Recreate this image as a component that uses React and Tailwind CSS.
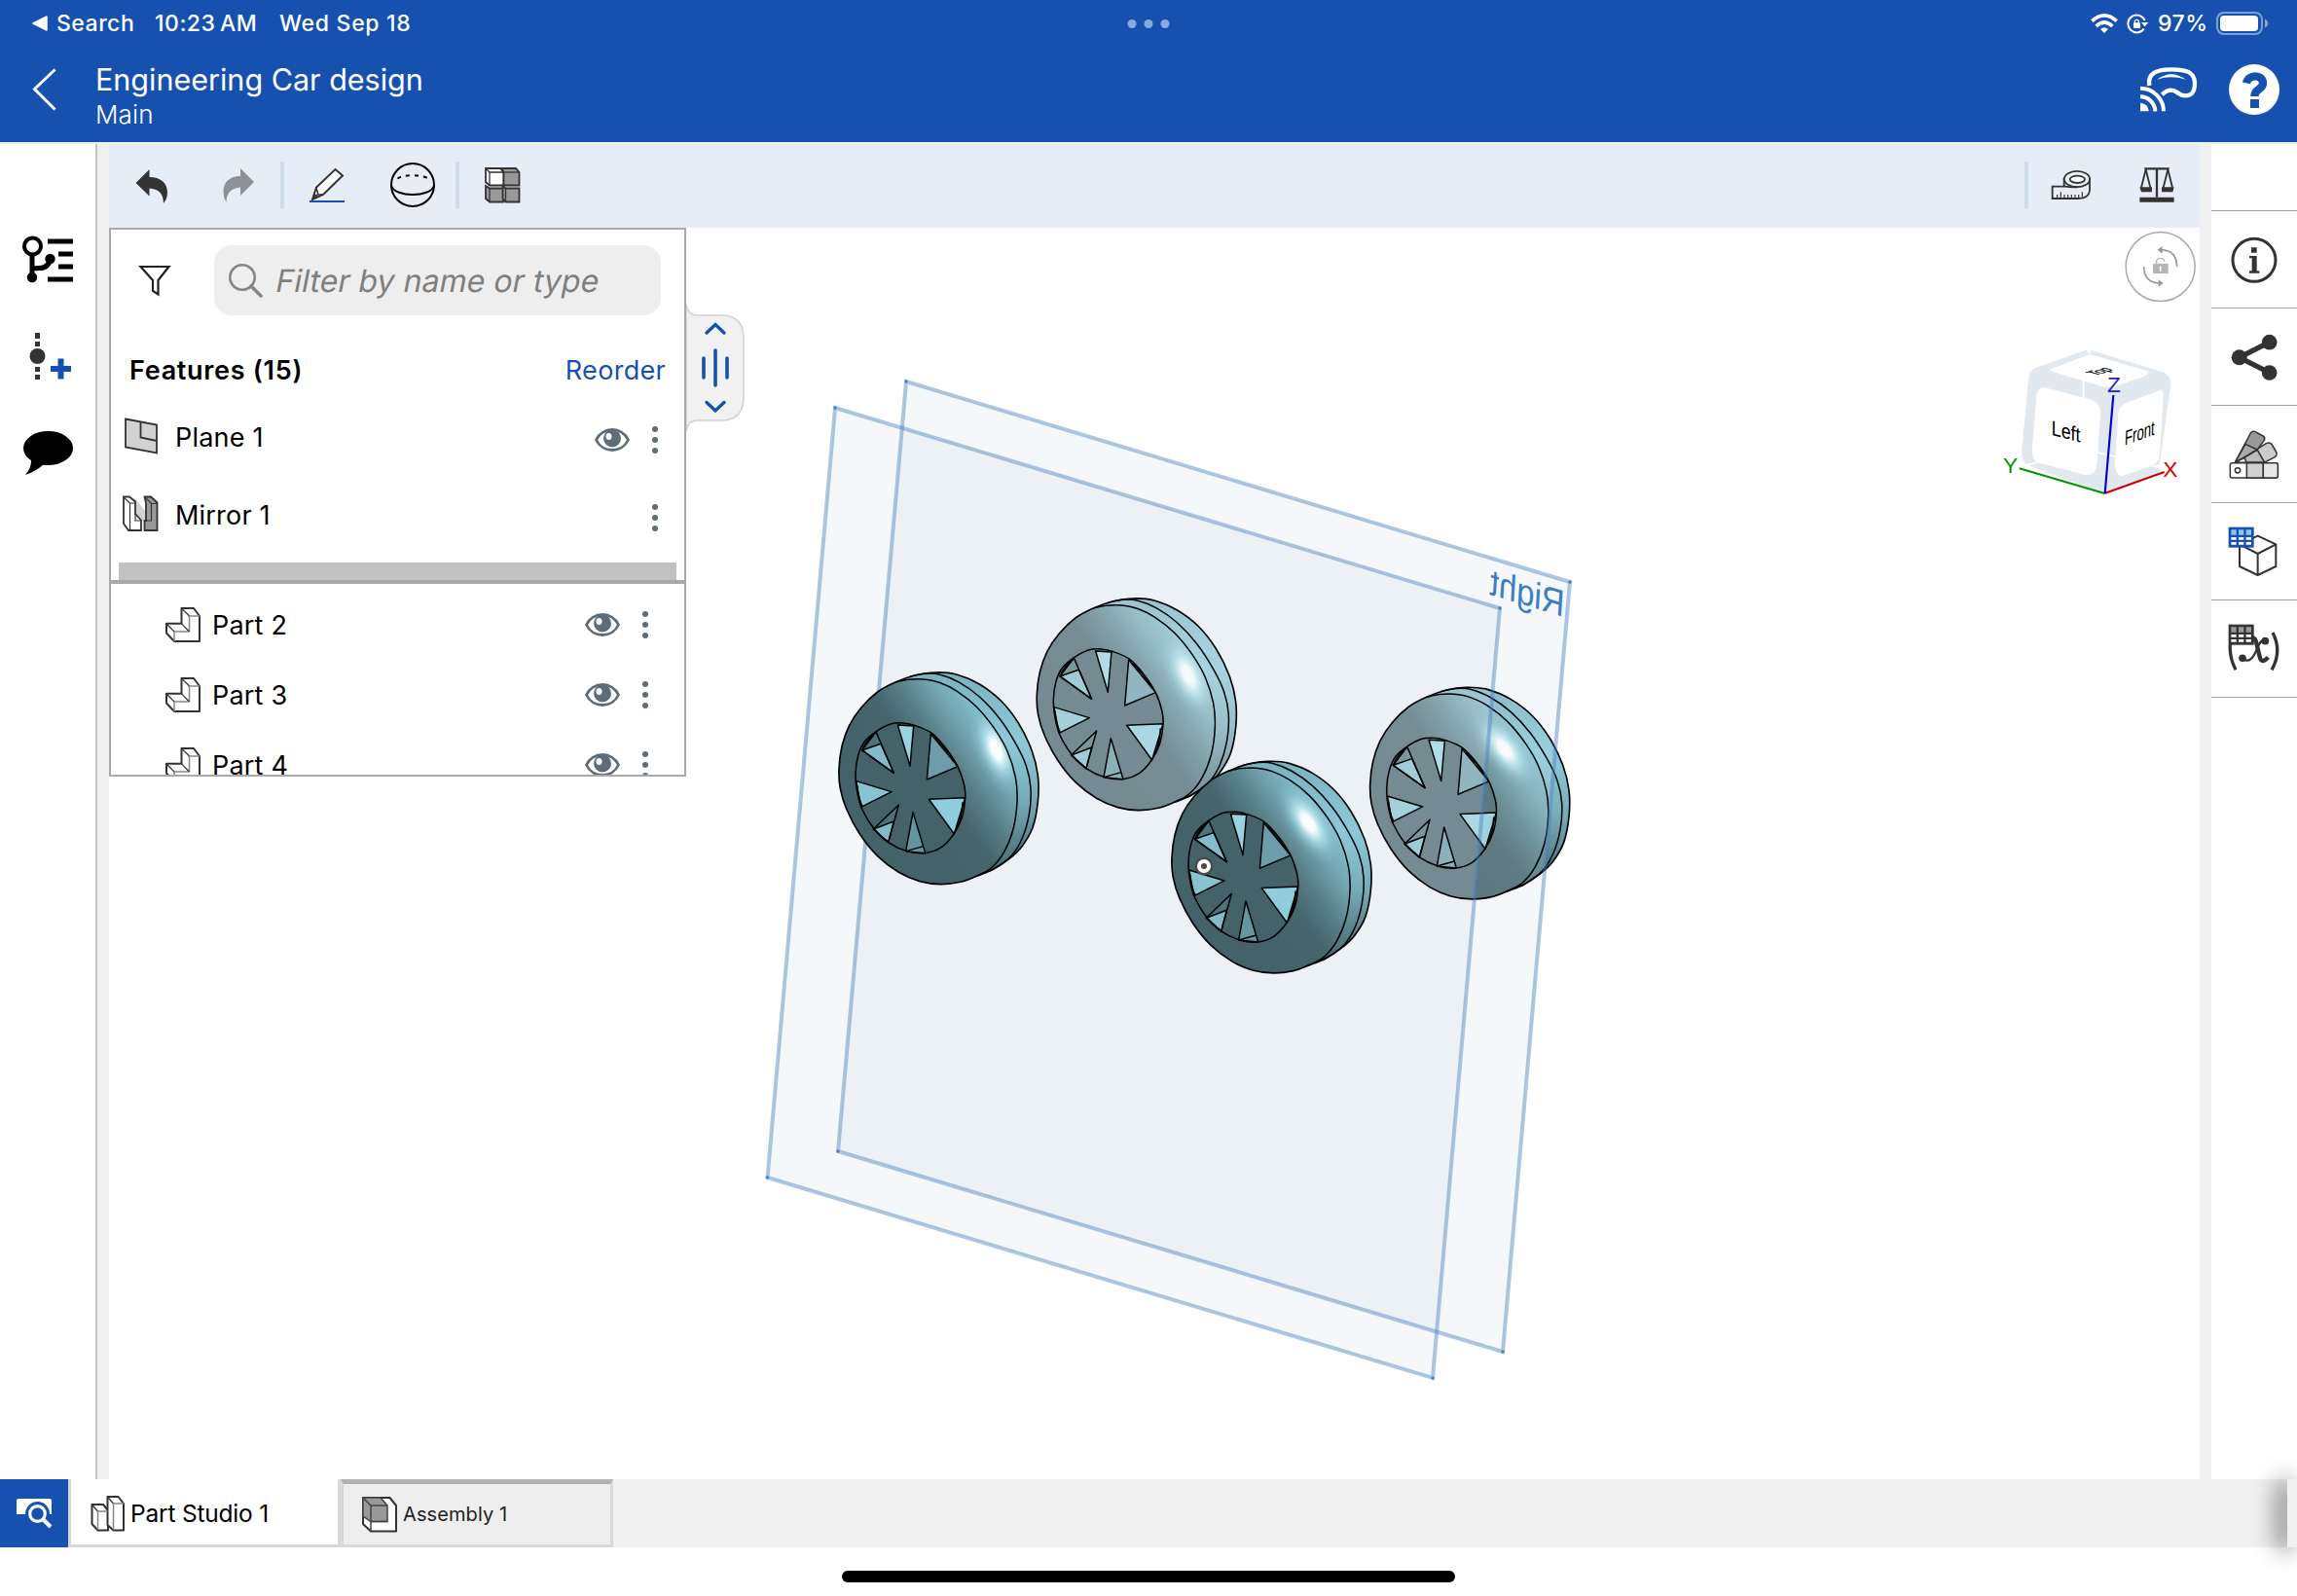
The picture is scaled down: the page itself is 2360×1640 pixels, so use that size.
import React from "react";

const Icon = ({ box, className, children }) => (
  <svg viewBox={box} className={className} fill="none">
    {children}
  </svg>
);

/* ---------- status bar and header ---------- */

function StatusBar() {
  return (
    <div className="relative flex h-[48px] items-center justify-between pl-[33px] pr-[29px] text-[23px] font-medium text-white">
      <div className="flex items-center">
        <Icon box="0 0 16 16" className="mr-[9px] h-[16px] w-[16px]">
          <path d="M1 8 L15 1 V15 Z" fill="#fff" stroke="#fff" strokeWidth="1.500" strokeLinejoin="round" />
        </Icon>
        <span className="w-[101px] tracking-[0.500px]">Search</span>
        <span className="w-[128px] whitespace-nowrap tracking-[0.500px]">10:23&#8201;AM</span>
        <span className="whitespace-nowrap tracking-[0.700px]">Wed Sep 18</span>
      </div>
      <div className="absolute left-1/2 top-[20px] flex -translate-x-1/2 gap-[8px]">
        <i className="h-[9px] w-[9px] rounded-full bg-[#86a9e0]" />
        <i className="h-[9px] w-[9px] rounded-full bg-[#86a9e0]" />
        <i className="h-[9px] w-[9px] rounded-full bg-[#86a9e0]" />
      </div>
      <div className="flex items-center">
        <Icon box="444 36 84 72" className="mr-[9px] h-[24px] w-[28px]">
          <path d="M448 65 Q486 30 524 65" stroke="#fff" strokeWidth="11" />
          <path d="M461 81 Q486 57 511 81" stroke="#fff" strokeWidth="11" />
          <path d="M474 90 Q486 79 498 90 L486 102 Z" fill="#fff" />
        </Icon>
        <Icon box="555 36 69 69" className="mr-[9px] h-[23px] w-[23px]">
          <path d="M608 86 A27 27 0 1 1 611 60" stroke="#fff" strokeWidth="6" />
          <path d="M600 66 H622 L611 79 Z" fill="#fff" />
          <rect x="576" y="67" width="21" height="17" rx="3" fill="#fff" />
          <path d="M580 68 V64 a6 6 0 0 1 12 0 V68" stroke="#fff" strokeWidth="4" />
        </Icon>
        <span className="w-[60px] tracking-[0.500px]">97%</span>
        <Icon box="0 0 54 24" className="h-[24px] w-[54px]">
          <rect x="1" y="1" width="46" height="22" rx="7" stroke="#fff" strokeOpacity="0.45" strokeWidth="2" />
          <rect x="4" y="4" width="39" height="16" rx="4" fill="#fff" />
          <path d="M50 7.500 Q53 9 53 12 T50 16.500 Z" fill="#fff" fillOpacity="0.5" />
        </Icon>
      </div>
    </div>
  );
}

function Header() {
  return (
    <header className="h-[146px] shrink-0 bg-[#1651b0] text-white">
      <StatusBar />
      <div className="flex h-[98px] items-start justify-between pl-[33px] pr-[18px]">
        <div className="flex">
          <Icon box="0 0 26 46" className="mt-[21px] h-[46px] w-[26px]">
            <path d="M23.500 2.500 L2.500 22.500 L23.500 43.500" stroke="#fff" strokeWidth="3" />
          </Icon>
          <div className="ml-[39px] mt-[15px]">
            <div className="whitespace-nowrap text-[30.500px] leading-[38px]">Engineering Car design</div>
            <div className="text-[26px] font-light leading-[34px] tracking-[0.200px]">Main</div>
          </div>
        </div>
        <div className="flex items-start">
          <Icon box="594 204 180 144" className="mt-[20px] h-[48px] w-[60px]">
            <path
              d="M625 264 C618 226 648 214 692 214 C740 214 764 222 765 256 C765 286 754 295 735 295 C715 295 710 278 692 278 C680 278 672 284 664 292"
              stroke="#fff"
              strokeWidth="13"
            />
            <path d="M649 245 Q692 212 737 245 Q692 231 649 245 Z" fill="#fff" />
            <path d="M597 317 a26 26 0 0 1 26 26 h-26 Z" fill="#fff" />
            <path d="M597 298 A46 46 0 0 1 643 343 M597 272 A72 72 0 0 1 669 343" stroke="#fff" strokeWidth="12" />
          </Icon>
          <Icon box="870 198 156 156" className="ml-[32px] mt-[18px] h-[52px] w-[52px]">
            <circle cx="948" cy="276" r="78" fill="#fff" />
            <path d="M924 256 C930 228 974 228 975 256 C975 278 949 272 949 297" stroke="#1651b0" strokeWidth="25" />
            <rect x="936" y="306" width="27" height="27" fill="#1651b0" />
          </Icon>
        </div>
      </div>
    </header>
  );
}

/* ---------- left rail ---------- */

function LeftRail() {
  return (
    <nav className="flex w-[100px] shrink-0 flex-col border-r-2 border-[#c4c4c4] bg-white">
      <Icon box="22 240 56 52" className="ml-[22px] mt-[92px] h-[52px] w-[56px]">
        <circle cx="33.500" cy="253" r="8.500" stroke="#000" strokeWidth="4" />
        <path d="M33 262 V286 M34 278 Q34 275.500 40 275.500 Q50 275.500 51.500 266" stroke="#000" strokeWidth="5" />
        <circle cx="33" cy="285" r="5.200" fill="#000" />
        <circle cx="51.500" cy="266" r="5.200" fill="#000" />
        <path d="M49 248 H75 M60 261 H75 M60 274 H75 M49 287 H75" stroke="#000" strokeWidth="5" />
      </Icon>
      <Icon box="22 340 56 52" className="ml-[22px] mt-[48px] h-[52px] w-[56px]">
        <path d="M38.500 342 V348 M38.500 351 V356 M38.500 377 V382 M38.500 385 V390" stroke="#333" strokeWidth="5" />
        <circle cx="38.500" cy="366" r="8" fill="#333" />
        <path d="M52 379 H73 M62.500 368.500 V389.500" stroke="#1651b0" strokeWidth="6" />
      </Icon>
      <Icon box="22 440 56 52" className="ml-[22px] mt-[48px] h-[52px] w-[56px]">
        <ellipse cx="49.500" cy="460.500" rx="25.500" ry="17.500" fill="#000" />
        <path d="M32 471 Q33 480 26 488 Q38 484 46 476 Z" fill="#000" />
      </Icon>
    </nav>
  );
}

/* ---------- toolbar ---------- */

const Separator = ({ className }) => <div className={"h-[48px] w-[4px] bg-[#cfdce6] " + className} />;

function Toolbar() {
  return (
    <div className="flex h-[86px] shrink-0 items-start justify-between bg-[#e6edf7] pt-[18px]">
      <div className="flex items-start">
        <Icon box="139 166 38 48" className="ml-[26px] h-[48px] w-[38px]">
          <path d="M140.500 188 L154.500 174 V182 C166 182 173 188 173 198 Q173 204 169 209 C169 199 164 194 154.500 193.500 V201.500 Z" fill="#333" />
        </Icon>
        <Icon box="226 166 38 48" className="ml-[50px] h-[48px] w-[38px]">
          <path d="M261 187 L247 173 V181 C236 181 229.500 187 229.500 197 Q229.500 203 232.500 208 C232.500 198 238 193 247 192.500 V201 Z" fill="#8e9195" />
        </Icon>
        <Separator className="ml-[24px]" />
        <Icon box="316 166 40 48" className="ml-[24px] h-[48px] w-[40px]">
          <path d="M321 205 L325 192.500 L344.500 174 L352 180.500 L332 200 Z" fill="#fff" stroke="#333" strokeWidth="2" />
          <path d="M325 193 L327 200 L332 200 M321 205 L327 199" stroke="#333" strokeWidth="1.500" />
          <path d="M320.500 205.500 L323 198.500 L327 202.500 Z" fill="#333" />
          <path d="M318 207 H354" stroke="#1651b0" strokeWidth="2" />
        </Icon>
        <Icon box="400 166 48 48" className="ml-[44px] h-[48px] w-[48px]">
          <circle cx="424" cy="190" r="22" stroke="#000" strokeWidth="2" />
          <path d="M402 191 C406 203 442 203 446 191" stroke="#000" strokeWidth="2" />
          <path d="M408.500 183.500 C414 179 434 179 441 184" stroke="#000" strokeWidth="2" strokeDasharray="4 5" />
        </Icon>
        <Separator className="ml-[20px]" />
        <Icon box="496 166 40 48" className="ml-[24px] h-[48px] w-[40px]">
          <path d="M499 173 H514 L517.500 177 V190.500 H503 L499 187 Z" fill="#fff" stroke="#333" strokeWidth="1.800" />
          <path d="M499 173 L503 177 H517 M503 177 V190" stroke="#333" strokeWidth="1.300" />
          <path d="M515.500 173 H530 L533.500 177 V190.500 H517.500 V177 Z" fill="#999" stroke="#333" strokeWidth="1.800" />
          <path d="M517.500 177 H533" stroke="#333" strokeWidth="1.300" />
          <path d="M499 191 L503 193.500 H517 V207.500 H503 L499 204 Z" fill="#999" stroke="#333" strokeWidth="1.800" />
          <path d="M503 193.500 V207" stroke="#333" strokeWidth="1.300" />
          <path d="M516.500 191 L519.500 193.500 H533.500 V207.500 H519.500 L516.500 204 Z" fill="#999" stroke="#333" strokeWidth="1.800" />
          <path d="M519.500 193.500 V207" stroke="#333" strokeWidth="1.300" />
        </Icon>
      </div>
      <div className="flex items-start">
        <Separator className="" />
        <Icon box="318 498 132 144" className="ml-[22px] h-[48px] w-[44px]">
          <path d="M326 575 H362 V552 H441 V588 Q438 612 405 612 H326 Z" fill="#e9eef6" stroke="#333" strokeWidth="5.500" />
          <ellipse cx="402" cy="552" rx="39.500" ry="24.500" fill="#e9eef6" stroke="#333" strokeWidth="5.500" />
          <ellipse cx="403" cy="553" rx="23" ry="11" fill="#fff" stroke="#333" strokeWidth="5.500" />
          <path d="M362 574 Q380 578 404 577" stroke="#333" strokeWidth="5.500" />
          <path d="M341 610 V600 M352 610 V592 M363 610 V600 M374 610 V600 M385 610 V600 M396 610 V600 M407 610 V600 M418 608 V592" stroke="#333" strokeWidth="3.500" />
        </Icon>
        <Icon box="588 498 120 144" className="ml-[46px] mr-[24px] h-[48px] w-[40px]">
          <path d="M595 608 H701 V623 H595 Z" fill="#333" />
          <path d="M610 520 H686 M648 520 V608" stroke="#333" strokeWidth="7" />
          <path d="M614 522 L600 578 M614 522 L628 578 M682 522 L668 578 M682 522 L696 578" stroke="#333" strokeWidth="5.500" />
          <path d="M595 577 H633 V592 H600 Z M663 577 H701 L697 592 H663 Z" fill="#333" />
        </Icon>
      </div>
    </div>
  );
}

/* ---------- feature panel ---------- */

const Eye = ({ className }) => (
  <Icon box="0 0 36 24" className={"h-[24px] w-[36px] " + className}>
    <path d="M1.500 12 C8 -2 28 -2 34.500 12 C28 26 8 26 1.500 12 Z" stroke="#5f6b78" strokeWidth="2.800" />
    <circle cx="18" cy="10.500" r="9" fill="#5f6b78" />
    <ellipse cx="14.500" cy="8.500" rx="3" ry="3.600" fill="#fff" />
  </Icon>
);

const Dots = () => (
  <div className="flex w-[8px] flex-col items-center gap-[5px]">
    <i className="h-[6px] w-[6px] rounded-full bg-[#5f6b78]" />
    <i className="h-[6px] w-[6px] rounded-full bg-[#5f6b78]" />
    <i className="h-[6px] w-[6px] rounded-full bg-[#5f6b78]" />
  </div>
);

const PlaneIcon = () => (
  <Icon box="0 0 36 38" className="h-[38px] w-[36px]">
    <path d="M2 1.500 L34 7.500 V36.500 L2 30.500 Z" fill="#d2d2d2" stroke="#333" strokeWidth="1.800" />
    <path d="M17.500 4.500 V20.500 L34 24" stroke="#333" strokeWidth="1.800" />
  </Icon>
);

const MirrorIcon = () => (
  <Icon box="0 0 38 38" className="ml-[-2px] h-[38px] w-[38px]">
    <path d="M13 2 L24 16 V27 L14 20 Z" fill="#d2d2d2" />
    <path d="M2 1.500 H8 L14 6.500 V19 L20 25.500 V36 H7 L2 29 Z" fill="#fff" stroke="#333" strokeWidth="1.800" />
    <path d="M2 2 L8.500 8 V36 M8.500 8 H14 M14 19 V26 H20" stroke="#333" strokeWidth="1.200" />
    <path d="M23.500 1.500 H30 L36.500 7.500 V36 H23.500 V26 H25 V8 Z" fill="#999" stroke="#333" strokeWidth="1.800" />
    <path d="M24 2 L30.500 8.500 H36 M30.500 8.500 V26 H24" stroke="#333" strokeWidth="1.200" />
  </Icon>
);

const PartIcon = () => (
  <Icon box="0 0 36 36" className="h-[36px] w-[36px]">
    <path d="M16.500 1 H29 L35 9 V35 H9 L1 26.500 V16.800 H16.500 Z" fill="#fff" stroke="#333" strokeWidth="2" strokeLinejoin="round" />
    <path d="M24.500 9 H35 M24.500 9 V25 M9 25 H24.500 M9 25 V35" stroke="#888" strokeWidth="1.500" />
    <path d="M16.500 1 L24.500 9 M1 17 L9 25 M16.500 16.800 L24.500 25" stroke="#333" strokeWidth="1.200" />
  </Icon>
);

function FeatureRow({ icon, name, visible }) {
  return (
    <div className="flex h-[80px] shrink-0 items-center pl-[13px] pr-[26px]">
      <div className="flex w-[53px] pb-[8px]">{icon}</div>
      <span className="grow pb-[4px] text-[27px] tracking-[0.200px]">{name}</span>
      {visible && <Eye className="mr-[22px]" />}
      <Dots />
    </div>
  );
}

function PartRow({ name }) {
  return (
    <div className="flex h-[72px] shrink-0 items-center pl-[56px] pr-[36px]">
      <PartIcon />
      <span className="ml-[12px] grow pt-[3px] text-[27px] tracking-[0.200px]">{name}</span>
      <Eye className="mr-[22px]" />
      <Dots />
    </div>
  );
}

function FeaturePanel() {
  return (
    <section className="flex h-[564px] w-[593px] flex-col border-2 border-[#a9a9a9] bg-white text-black">
      <div className="flex h-[88px] shrink-0 items-center pl-[28px] pr-[24px] pt-[16px]">
        <Icon box="0 0 34 34" className="h-[34px] w-[34px]">
          <path d="M2.500 3 H31.500 L20.500 17 V31.500 L15 28 V17 Z" stroke="#222" strokeWidth="2.200" />
        </Icon>
        <div className="ml-[44px] flex h-[72px] w-[459px] items-center rounded-[18px] bg-[#eee] pl-[14px]">
          <Icon box="0 0 36 36" className="h-[36px] w-[36px]">
            <circle cx="15" cy="15" r="12.700" stroke="#85858a" strokeWidth="2.600" />
            <path d="M24 24 L34 34" stroke="#85858a" strokeWidth="3.600" strokeLinecap="round" />
          </Icon>
          <span className="ml-[14px] inline-block -skew-x-[11deg] whitespace-nowrap pt-[1px] text-[32px] tracking-[0.050px] text-[#7f7f7f]">
            Filter by name or type
          </span>
        </div>
      </div>
      <div className="flex h-[88px] shrink-0 items-center justify-between pl-[19px] pr-[19px] pt-[26px] text-[27px]">
        <span className="font-semibold tracking-[0.700px]">Features (15)</span>
        <span className="tracking-[0.300px] text-[#1651b0]">Reorder</span>
      </div>
      <FeatureRow icon={<PlaneIcon />} name="Plane 1" visible />
      <FeatureRow icon={<MirrorIcon />} name="Mirror 1" />
      <div className="mx-[8px] mt-[6px] h-[18px] shrink-0 bg-[#c1c1c1]" />
      <div className="h-[4px] shrink-0 bg-[#a9a9a9]" />
      <div className="flex min-h-0 grow flex-col overflow-hidden pt-[6px]">
        <PartRow name="Part 2" />
        <PartRow name="Part 3" />
        <PartRow name="Part 4" />
      </div>
    </section>
  );
}

function PanelHandle() {
  return (
    <Icon box="705 312 62 132" className="mt-[78px] h-[132px] w-[62px]">
      <path
        d="M705 313 Q707 324 716 324 H741 Q764 324 764 348 V408 Q764 432 741 432 H716 Q707 432 705 443 Z"
        fill="#f1f1f1"
        stroke="#d2d2d2"
        strokeWidth="1.500"
      />
      <path d="M726 342 L735 333.500 L744 342 M726 413.500 L735 422 L744 413.500" stroke="#1651b0" strokeWidth="3.400" strokeLinecap="round" />
      <path d="M723 368 V388 M735 360 V396 M747 368 V388" stroke="#1651b0" strokeWidth="3.600" strokeLinecap="round" />
    </Icon>
  );
}

/* ---------- 3D scene ---------- */

// Smooth curve through a list of points (Catmull-Rom converted to Bezier).
function smooth(points, closed) {
  const n = points.length;
  const at = (i) => (closed ? points[(i + n) % n] : points[Math.max(0, Math.min(n - 1, i))]);
  let d = `M${points[0][0]} ${points[0][1]}`;
  const last = closed ? n : n - 1;
  for (let i = 0; i < last; i++) {
    const [p0, p1, p2, p3] = [at(i - 1), at(i), at(i + 1), at(i + 2)];
    d += ` C${p1[0] + (p2[0] - p0[0]) / 6} ${p1[1] + (p2[1] - p0[1]) / 6} ${p2[0] - (p3[0] - p1[0]) / 6} ${p2[1] - (p3[1] - p1[1]) / 6} ${p2[0]} ${p2[1]}`;
  }
  return closed ? d + " Z" : d;
}

const OUTLINE = smooth(
  [
    [66, 360], [75, 290], [98, 225], [135, 170], [185, 122], [240, 92], [300, 71], [365, 62], [430, 69], [500, 99],
    [565, 149], [619, 218], [660, 302], [679, 380], [679, 460], [663, 540], [630, 598], [590, 637], [540, 670],
    [490, 690], [440, 708], [380, 715], [315, 706], [250, 678], [185, 628], [130, 560], [90, 485], [70, 420],
  ],
  true
);
const FRONT_EDGE = smooth([
  [240, 92], [280, 84], [325, 83], [375, 93], [430, 120], [490, 168], [545, 235], [585, 305], [610, 385], [615, 460],
  [603, 545], [575, 615], [535, 665], [485, 692],
]);
const BACK_EDGE = smooth([
  [285, 74], [330, 66], [375, 68], [435, 92], [500, 138], [560, 203], [610, 280], [643, 350], [657, 420], [652, 500],
  [630, 575], [595, 630], [545, 666], [500, 685],
]);
const FRONT_FACE = smooth(
  [
    [66, 360], [75, 290], [98, 225], [135, 170], [185, 122], [240, 92], [280, 84], [325, 83], [375, 93], [430, 120],
    [490, 168], [545, 235], [585, 305], [610, 385], [615, 460], [603, 545], [575, 615], [535, 665], [485, 692],
    [440, 708], [380, 715], [315, 706], [250, 678], [185, 628], [130, 560], [90, 485], [70, 420],
  ],
  true
);
const HUB = smooth(
  [
    [117, 375], [125, 318], [145, 275], [182, 243], [225, 221], [262, 218], [298, 225], [350, 248], [395, 295],
    [432, 352], [452, 410], [455, 450], [445, 510], [420, 560], [380, 602], [330, 619], [275, 613], [218, 586],
    [175, 545], [138, 485], [122, 430],
  ],
  true
);

const HOLES = [
  ["M247 224 L296 227 L285 351 Z", "#9ad2df"],
  ["M349 251 L432 352 L337 392 Z", "#6d9dab"],
  ["M343 453 L455 448 L421 560 Z", "#8fcddc"],
  ["M272 613 L294 493 L332 619 Z", "#6496a2"],
  ["M218 586 L250 470 L172 545 Z", "#4d727b"],
  ["M172 545 L235 521 L218 586 Z", "#82bccb"],
  ["M134 477 L119 397 L228 430 Z", "#88c3d1"],
  ["M137 302 L180 245 L235 372 Z", "#4d727b"],
  ["M137 302 L195 282 L235 372 Z", "#82bccb"],
];

const place = ({ x, y }) => `translate(${x} ${y}) scale(0.33333)`;

function WheelBody({ wheel }) {
  const { glow } = wheel;
  return (
    <g transform={place(wheel)}>
      <path d={OUTLINE} fill="url(#tread)" />
      <path d={FRONT_FACE} fill="url(#tire)" />
      <g clipPath="url(#face)">
        <g transform={`translate(${glow.x} ${glow.y}) rotate(${glow.angle})`}>
          <ellipse rx="150" ry="68" fill="url(#glow)" />
        </g>
      </g>
      <path d={HUB} fill="#44626a" />
      {HOLES.map(([d, fill]) => (
        <path key={d} d={d} fill={fill} />
      ))}
    </g>
  );
}

function WheelEdges({ wheel }) {
  return (
    <g transform={place(wheel)} stroke="#000" strokeWidth="4.500" strokeLinejoin="round" fill="none">
      {HOLES.map(([d]) => (
        <path key={d} d={d} />
      ))}
      <path d="M362 262 Q400 300 424 340 M447 462 Q446 510 428 545 M272 613 L326 598 M122 410 Q124 445 138 475 M137 302 Q150 270 180 247" />
      <path d={HUB} />
      <path d={FRONT_EDGE} />
      <path d={BACK_EDGE} />
      <path d={OUTLINE} strokeWidth="5" />
    </g>
  );
}

const RIGHT_PLANE = "931,392 1613,598 1544,1389 861,1183";
const MID_PLANE = "858,419 1541,625 1472,1416 788.5,1210";
const PLANE_CORNERS = (RIGHT_PLANE + " " + MID_PLANE).split(" ").map((p) => p.split(","));
const FAR_WHEELS = [
  { x: 1043.3, y: 594.3, glow: { x: 532, y: 298, angle: 64 } },
  { x: 1385.7, y: 685.6, glow: { x: 480, y: 252, angle: 52 } },
];
const NEAR_WHEELS = [
  { x: 840, y: 670.3, glow: { x: 550, y: 300, angle: 68 } },
  { x: 1182, y: 761.6, glow: { x: 487, y: 252, angle: 56 } },
];

function Scene() {
  return (
    <svg viewBox="112 234 2148 1286" className="absolute inset-0 h-full w-full">
      <defs>
        <linearGradient id="tire" gradientUnits="userSpaceOnUse" x1="250" y1="500" x2="610" y2="243">
          <stop offset="0" stopColor="#44626a" />
          <stop offset="0.34" stopColor="#46656d" />
          <stop offset="0.53" stopColor="#588089" />
          <stop offset="0.72" stopColor="#73a6b3" />
          <stop offset="0.92" stopColor="#86c3d1" />
        </linearGradient>
        <linearGradient id="tread" gradientUnits="userSpaceOnUse" x1="0" y1="60" x2="0" y2="710">
          <stop offset="0" stopColor="#78b2bf" />
          <stop offset="0.33" stopColor="#8ccad9" />
          <stop offset="0.6" stopColor="#78adb9" />
          <stop offset="0.82" stopColor="#56808a" />
          <stop offset="1" stopColor="#44626a" />
        </linearGradient>
        <radialGradient id="glow">
          <stop offset="0" stopColor="#fff" />
          <stop offset="0.2" stopColor="#fbffff" stopOpacity="0.97" />
          <stop offset="0.45" stopColor="#c4f2fb" stopOpacity="0.6" />
          <stop offset="0.72" stopColor="#9fdbe8" stopOpacity="0.22" />
          <stop offset="1" stopColor="#88c5d3" stopOpacity="0" />
        </radialGradient>
        <clipPath id="face">
          <path d={FRONT_FACE} />
        </clipPath>
        <clipPath id="rightPlane">
          <polygon points={RIGHT_PLANE} />
        </clipPath>
        <clipPath id="far">
          {FAR_WHEELS.map((w) => (
            <path key={w.x} d={OUTLINE} transform={place(w)} />
          ))}
        </clipPath>
      </defs>
      <polygon points={RIGHT_PLANE} fill="#f4f8fb" />
      <polygon points={MID_PLANE} fill="#f4f8fb" />
      <polygon points={MID_PLANE} fill="#ecf1f6" clipPath="url(#rightPlane)" />
      {FAR_WHEELS.map((w) => (
        <WheelBody key={w.x} wheel={w} />
      ))}
      <g clipPath="url(#far)" fill="#eff5fb" fillOpacity="0.155">
        <polygon points={RIGHT_PLANE} />
        <polygon points={MID_PLANE} />
      </g>
      {FAR_WHEELS.map((w) => (
        <WheelEdges key={w.x} wheel={w} />
      ))}
      <g fill="none" stroke="#467dbe" strokeOpacity="0.44" strokeWidth="4">
        <polygon points={RIGHT_PLANE} />
        <polygon points={MID_PLANE} />
      </g>
      {PLANE_CORNERS.map(([cx, cy]) => (
        <circle key={cx} cx={cx} cy={cy} r="1.700" fill="#4a80bd" />
      ))}
      <text
        transform="matrix(-0.86 -0.262 -0.06 1 1606.5 634)"
        fontFamily="Liberation Sans, sans-serif"
        fontSize="38"
        fill="#3f7cbd"
      >
        Right
      </text>
      {NEAR_WHEELS.map((w) => (
        <g key={w.x}>
          <WheelBody wheel={w} />
          <WheelEdges wheel={w} />
        </g>
      ))}
      <circle cx="1237" cy="890" r="9.500" fill="#4a4a4a" />
      <circle cx="1237" cy="890" r="5" fill="none" stroke="#fff" strokeWidth="4" />
    </svg>
  );
}

function ViewControls() {
  return (
    <Icon box="100 45 620 830" className="relative ml-auto mt-px h-[276.670px] w-[206.670px] self-start">
      <circle cx="600" cy="162" r="106.500" fill="#fff" stroke="#aaa" strokeWidth="4.500" />
      <path d="M651 162 Q650 112 603 110 M549 162 Q550 212 598 213" stroke="#999" strokeWidth="5" />
      <path d="M606 99 V122 L591 110 Z M594 202 V224 L609 213 Z" fill="#999" />
      <path d="M577 153 H624 V183 H577 Z" fill="#b5b5b5" />
      <path d="M588 153 V146 a12 10 0 0 1 24 0" stroke="#b5b5b5" strokeWidth="4" />
      <path d="M600 160 l5 6 h-3 v11 h-4 v-11 h-3 Z" fill="#fff" />

      <path
        d="M368 420 L215 474 Q194 484 194 505 L172 735 Q171 760 192 775 L428 862 L600 797 L598 770 L632 525 Q632 500 612 488 L395 422 Z"
        fill="#e1e8ee"
      />
      <g fill="#fff">
        <path d="M262 478 L376 434 L390 434 L560 484 Q570 490 550 500 L460 531 Q440 536 420 531 L268 486 Q258 482 262 478 Z" />
        <path d="M240 534 L380 570 Q416 580 415 610 L405 765 Q402 805 370 805 L218 765 Q204 750 204 730 L218 560 Q220 536 240 534 Z" />
        <path d="M500 580 L600 543 Q610 545 609 560 L598 745 Q594 768 570 778 L480 808 Q460 800 460 770 L470 615 Q474 588 500 580 Z" />
        <path d="M369 418 L384 434 L384 420 Z M360 513 h6 v58 h-6 Z M405 732 L460 745 L460 749 L405 737 Z M190 770 L225 762 L225 766 L190 777 Z" />
        <path d="M612 768 L570 777 L600 786 Z" />
      </g>
      <g fontFamily="Liberation Sans, sans-serif" fill="#000" fontSize="64">
        <text transform="matrix(0.84 0.22 0 1 264 680)">Left</text>
        <text transform="matrix(0.62 -0.22 -0.04 1 489 713)">Front</text>
        <text transform="matrix(0.53 -0.17 0.75 0.22 401 498)" stroke="#000" strokeWidth="2">
          Top
        </text>
      </g>
      <path d="M165 784 L428 861" stroke="#009600" strokeWidth="6" />
      <path d="M428 861 L612 795" stroke="#c80000" strokeWidth="6" />
      <path d="M429 861 L455 558" stroke="#0000d2" strokeWidth="6.500" />
      <g fontFamily="Liberation Sans, sans-serif" fontSize="68">
        <text x="115" y="797" fill="#009600">Y</text>
        <text x="608" y="809" fill="#d20000">X</text>
        <text x="436" y="549" fill="#2020d8">Z</text>
      </g>
    </Icon>
  );
}

/* ---------- right rail ---------- */

const Cell = ({ children }) => (
  <div className="flex h-[100px] items-center justify-center border-b border-[#a5a5a5] pt-px">{children}</div>
);

const TableGlyph = ({ frame, head }) => (
  <g>
    <rect x="150" y="363" width="78" height="63" fill={frame} />
    <path d="M158 371 h16 v16 h-16 Z M181 371 h16 v16 h-16 Z M204 371 h16 v16 h-16 Z" fill={head} />
    <path
      d="M158 394 h16 v8 h-16 Z M181 394 h16 v8 h-16 Z M204 394 h16 v8 h-16 Z M158 409 h16 v8 h-16 Z M181 409 h16 v8 h-16 Z M204 409 h16 v8 h-16 Z"
      fill="#fff"
    />
  </g>
);

function RightRail() {
  return (
    <aside className="flex w-[88px] shrink-0 flex-col bg-white">
      <div className="h-[69px] border-b border-[#a5a5a5]" />
      <Cell>
        <Icon box="810 65 156 152" className="h-[50.670px] w-[52px]">
          <circle cx="888" cy="141" r="66" stroke="#333" strokeWidth="9" />
          <path d="M879 102 h17 v16 h-17 Z M873 128 h23 v46 h8 v7 h-31 v-7 h8 v-39 h-8 Z" fill="#333" />
        </Icon>
      </Cell>
      <Cell>
        <Icon box="810 365 156 152" className="h-[50.670px] w-[52px]">
          <path d="M935 394 L842 441 L935 488" stroke="#333" strokeWidth="16" />
          <circle cx="935" cy="394" r="23.500" fill="#333" />
          <circle cx="842" cy="441" r="24" fill="#333" />
          <circle cx="935" cy="488" r="23.500" fill="#333" />
        </Icon>
      </Cell>
      <Cell>
        <Icon box="150 62 162 156" className="h-[52px] w-[54px]">
          <g stroke="#333" strokeWidth="4.500" strokeLinejoin="round">
            <path d="M197 150 L268 106 Q280 100 286 110 L300 134 Q302 142 296 147 L262 165 L205 165 Z" fill="#ccc" />
            <path d="M195 150 L240 125 L263 164 H207 Z" fill="#bbb" />
            <path d="M173 163 L220 74 Q226 66 234 70 L258 83 Q266 88 262 96 L241 125 L200 150 Z" fill="#999" />
            <path d="M204 108 L240 125 L195 152 L173 163 Z" fill="#aaa" />
            <path d="M173 165 L201 150 L207 165 Z" fill="#fff" />
            <rect x="157" y="166" width="147" height="46" rx="6" fill="#fff" />
            <path d="M208 166 H259 V212 H208 Z" fill="#d0d0d0" />
            <path d="M259 166 H298 Q304 166 304 172 V206 Q304 212 298 212 H259 Z" fill="#e8e8e8" />
          </g>
          <circle cx="180" cy="189" r="8" stroke="#333" strokeWidth="4.500" />
        </Icon>
      </Cell>
      <Cell>
        <Icon box="148 361 162 156" className="h-[52px] w-[54px]">
          <path d="M184 416 L240 390 L296 416 V484 L240 511 L184 484 Z M184 416 L240 445 L296 416 M240 445 V511" stroke="#333" strokeWidth="6" strokeLinejoin="round" />
          <TableGlyph frame="#1651b0" head="#8cc3f0" />
        </Icon>
      </Cell>
      <Cell>
        <Icon box="148 361 162 156" className="h-[52px] w-[54px]">
          <path d="M155 424 Q152 464 172 503" stroke="#333" strokeWidth="10" />
          <path d="M286 388 Q316 446 283 503" stroke="#333" strokeWidth="10" />
          <path
            d="M212 410 C224 398 232 404 236 420 L246 462 C249 478 258 480 272 464"
            stroke="#333"
            strokeWidth="13"
          />
          <path d="M264 412 C250 408 243 424 237 440 C228 462 214 484 194 469" stroke="#333" strokeWidth="7" />
          <circle cx="263" cy="414" r="11.500" fill="#333" />
          <circle cx="193" cy="467" r="11.500" fill="#333" />
          <TableGlyph frame="#333" head="#999" />
        </Icon>
      </Cell>
    </aside>
  );
}

/* ---------- bottom tabs ---------- */

function TabBar() {
  return (
    <footer className="relative flex h-[70px] shrink-0 bg-[#f0f0f0]">
      <div className="flex w-[70px] items-center justify-center bg-[#1651b0]">
        <Icon box="0 0 38 32" className="h-[32px] w-[38px]">
          <path d="M3 1 H35 Q37 1 37 3 V17 H1 V3 Q1 1 3 1 Z" fill="#fff" />
          <circle cx="22.500" cy="16.500" r="12.500" fill="#1651b0" />
          <circle cx="22.500" cy="16.500" r="7.800" stroke="#fff" strokeWidth="3.200" />
          <path d="M28 22 L36 30" stroke="#fff" strokeWidth="4" />
        </Icon>
      </div>
      <div className="flex w-[280px] items-center border-b-[3px] border-l-[3px] border-r-[3px] border-[#d8d8d8] bg-white pl-[20px] pt-[2px]">
        <Icon box="0 0 36 38" className="h-[38px] w-[36px]">
          <g fill="#fff" stroke="#333" strokeWidth="2" strokeLinejoin="round">
            <path d="M1.500 10 H13 L18 16 V36.500 H7.500 L1.500 30 Z" />
            <path d="M17.500 2 H28.500 L34 9 V36.500 H23.500 L17.500 31 Z" />
          </g>
          <path d="M7.500 17 H17.500 M7.500 17 V36 M23.500 9 H34 M23.500 9 V36" stroke="#888" strokeWidth="1.500" />
          <path d="M1.500 10 L7.500 17 M17.500 2 L23.500 9" stroke="#333" strokeWidth="1.200" />
        </Icon>
        <span className="ml-[5px] pt-[1px] text-[24.500px] tracking-[-0.200px] text-black">Part Studio 1</span>
      </div>
      <div className="flex w-[280px] items-center border-b-[3px] border-l-[3px] border-r-[3px] border-t-[5px] border-[#d8d8d8] border-t-[#b2b2b2] bg-[#eee] pl-[19px]">
        <Icon box="0 0 36 38" className="mb-[1px] h-[38px] w-[36px]">
          <path d="M1 2 H28.500 L35 10 V36.500 H9 L1 29 Z" fill="#fff" stroke="#333" strokeWidth="2" strokeLinejoin="round" />
          <path d="M1 2 H19 L26 10 V26.500 H9 L1 21 Z" fill="#999" stroke="#444" strokeWidth="1.500" />
          <path d="M1 2 L9 10 H26 M9 10 V36 M9 26.500 H26" stroke="#444" strokeWidth="1.500" />
        </Icon>
        <span className="ml-[6px] text-[20px] tracking-[0.100px] text-[#222]">Assembly 1</span>
      </div>
      <div className="absolute right-0 top-0 h-[70px] w-[10px] bg-[#f0f0f0] shadow-[-7px_2px_24px_0_rgba(0,0,0,0.8)]" />
    </footer>
  );
}

export default function App() {
  return (
    <div className="flex h-[1640px] w-[2360px] flex-col overflow-hidden bg-white font-['Inter',sans-serif]">
      <Header />
      <div className="flex h-[1374px] shrink-0 border-t-2 border-[#eff0f6]">
        <LeftRail />
        <div className="w-[12px] shrink-0 bg-[#f0f0f0]" />
        <main className="flex w-[2148px] shrink-0 flex-col bg-white">
          <Toolbar />
          <div className="relative flex h-[1286px] items-start">
            <Scene />
            <div className="relative flex items-start">
              <FeaturePanel />
              <PanelHandle />
            </div>
            <ViewControls />
          </div>
        </main>
        <div className="w-[12px] shrink-0 bg-[#f0f0f0]" />
        <RightRail />
      </div>
      <TabBar />
      <div className="flex h-[50px] shrink-0 justify-center pt-[24px]">
        <div className="h-[12px] w-[630px] rounded-full bg-black" />
      </div>
    </div>
  );
}
